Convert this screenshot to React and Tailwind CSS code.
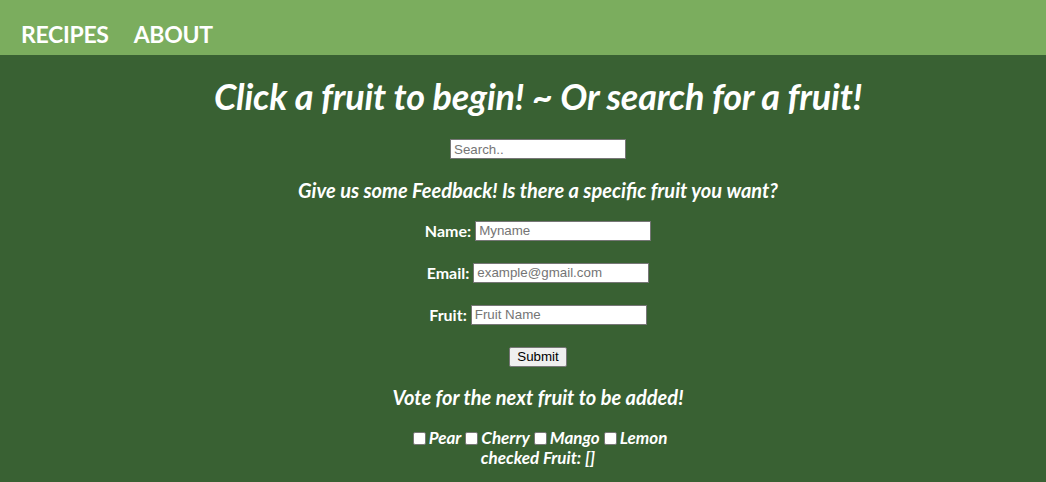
import { useState } from "react";

const fruits = ["Pear", "Cherry", "Mango", "Lemon"];

const inputCls =
  "h-[20px] w-[176px] bg-white border border-[#767676] px-[3px] text-[13.33px] font-normal not-italic text-black placeholder:text-[#757575] font-['Liberation_Sans',Arial,sans-serif] outline-none";

export default function App() {
  const [checked, setChecked] = useState([]);

  const toggle = (fruit) => {
    setChecked((prev) =>
      prev.includes(fruit) ? prev.filter((f) => f !== fruit) : [...prev, fruit]
    );
  };

  return (
    <div className="min-h-screen bg-[#396133] text-white font-['Lato',sans-serif]">
      <nav className="h-[55px] bg-[#7bad5e] flex items-end pb-[4px] pl-[21px] gap-[25px] text-[23px] font-bold">
        <a className="tracking-[-0.3px]">RECIPES</a>
        <a className="tracking-[-0.3px]">ABOUT</a>
      </nav>

      <div className="flex flex-col items-center text-center pl-[30px]">
        <h1 className="mt-[20px] text-[36px] leading-[42px] font-bold italic tracking-[-0.2px]">
          Click a fruit to begin! ~ Or search for a fruit!
        </h1>

        <input className={"mt-[22px] " + inputCls} placeholder="Search.." />

        <h3 className="mt-[19px] text-[20px] leading-[24px] font-bold italic">
          Give us some Feedback! Is there a specific fruit you want?
        </h3>

        <form className="flex flex-col items-center" onSubmit={(e) => e.preventDefault()}>
          <div className="mt-[19px] flex items-center gap-[4px] text-[16px] leading-[20px] font-bold">
            <label>Name:</label>
            <input className={inputCls} placeholder="Myname" />
          </div>
          <div className="mt-[22px] flex items-center gap-[4px] text-[16px] leading-[20px] font-bold">
            <label>Email:</label>
            <input className={inputCls} placeholder="example@gmail.com" />
          </div>
          <div className="mt-[22px] flex items-center gap-[4px] text-[16px] leading-[20px] font-bold">
            <label>Fruit:</label>
            <input className={inputCls} placeholder="Fruit Name" />
          </div>
          <button
            type="submit"
            className="mt-[22px] h-[20px] px-[7px] bg-[#efefef] border border-[#767676] rounded-[2px] text-black text-[13.33px] leading-[18px] font-['Liberation_Sans',Arial,sans-serif]"
          >
            Submit
          </button>
        </form>

        <h3 className="mt-[18px] text-[20px] leading-[24px] font-bold italic">
          Vote for the next fruit to be added!
        </h3>

        <div className="mt-[19px] flex items-center text-[17px] leading-[20px] font-bold italic">
          {fruits.map((fruit) => (
            <label key={fruit} className="flex items-center">
              <span
                onClick={() => toggle(fruit)}
                className={
                  "inline-block w-[13px] h-[13px] ml-[4px] mr-[3px] border border-[#767676] rounded-[2px] " +
                  (checked.includes(fruit) ? "bg-[#0075ff]" : "bg-white")
                }
              />
              <span>{fruit}</span>
            </label>
          ))}
        </div>
        <div className="text-[17px] leading-[20px] font-bold italic">
          checked Fruit: [{checked.join(", ")}]
        </div>
      </div>
    </div>
  );
}
